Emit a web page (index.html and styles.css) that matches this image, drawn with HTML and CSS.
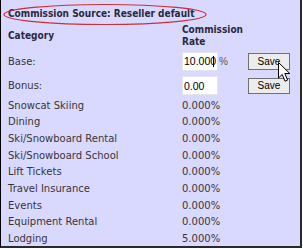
FILE: index.html
```html
<!DOCTYPE html>
<html lang="en">
<head>
    <meta charset="UTF-8">
    <title>Commission Rates</title>
    <link rel="stylesheet" href="styles.css">
</head>
<body>
    <div class="panel">
        <svg class="callout" width="206" height="24" viewBox="0 0 206 24">
            <ellipse cx="103" cy="12.5" rx="101" ry="10" fill="none" stroke="#c8303c" stroke-width="1.2"/>
        </svg>
        <h1 class="source">Commission Source: Reseller default</h1>

        <div class="rates">
            <div class="head">Category</div>
            <div class="head">Commission<br>Rate</div>
            <div></div>

            <div>Base:</div>
            <div class="field"><input class="rate-input" type="text" value="10.000"><span class="caret"></span><span class="unit">%</span></div>
            <div><button class="save">Save</button></div>

            <div>Bonus:</div>
            <div class="field"><input class="rate-input" type="text" value="0.00"></div>
            <div><button class="save small">Save</button></div>

            <div>Snowcat Skiing</div><div>0.000%</div><div></div>
            <div>Dining</div><div>0.000%</div><div></div>
            <div>Ski/Snowboard Rental</div><div>0.000%</div><div></div>
            <div>Ski/Snowboard School</div><div>0.000%</div><div></div>
            <div>Lift Tickets</div><div>0.000%</div><div></div>
            <div>Travel Insurance</div><div>0.000%</div><div></div>
            <div>Events</div><div>0.000%</div><div></div>
            <div>Equipment Rental</div><div>0.000%</div><div></div>
            <div>Lodging</div><div>5.000%</div><div></div>
        </div>

        <svg class="pointer" width="14" height="21" viewBox="0 0 14 21">
            <path d="M0.5 0.5 L0.5 16 L4.2 12.4 L7 19.2 L9.6 18.1 L6.8 11.5 L11.8 11.5 Z" fill="#fff" stroke="#000" stroke-width="1"/>
        </svg>
    </div>
</body>
</html>
```

FILE: styles.css
```css
body {
    margin: 0;
    background: #fff;
    font-family: 'DejaVu Sans', Verdana, sans-serif;
    font-size: 10px;
    color: #3a3434;
}
.panel {
    position: relative;
    box-sizing: border-box;
    width: 302px;
    height: 248px;
    padding: 7px 0 0 7px;
    background-color: #d9d9ff;
    border-left: 1px solid #000;
    border-right: 2px solid #2a2a2a;
    border-bottom: 2px solid #2a2a2a;
}
.callout {
    position: absolute;
    left: 1px;
    top: 2px;
}
.source, .head {
    font-family: 'DejaVu Sans Condensed', 'DejaVu Sans', sans-serif;
    font-stretch: condensed;
    font-weight: bold;
    color: #2a2a3a;
}
.source {
    margin: 0 0 3px;
    font-size: 10px;
    line-height: 14px;
}
.rates {
    display: grid;
    grid-template-columns: 174px 66px 1fr;
    grid-template-rows: 24px 26px 23px repeat(9, 16.625px);
    align-items: center;
}
.head {
    line-height: 12px;
}
.field {
    position: relative;
    display: flex;
    align-items: center;
}
.rate-input {
    box-sizing: border-box;
    width: 36px;
    height: 19px;
    padding: 0 1px;
    border: 1px solid #e4e4ee;
    background: #fff;
    font-family: 'Liberation Sans', Arial, sans-serif;
    font-size: 10.5px;
    color: #000;
}
.caret {
    position: absolute;
    left: 31px;
    top: 4px;
    width: 1px;
    height: 11px;
    background: #000;
}
.unit {
    margin-left: 1px;
    font-family: 'Liberation Sans', Arial, sans-serif;
    font-size: 10px;
    color: #555;
}
.save {
    box-sizing: border-box;
    width: 42px;
    height: 17px;
    padding: 0;
    border: 1px solid #707070;
    background: #ececec;
    font-family: 'Liberation Sans', Arial, sans-serif;
    font-size: 10px;
    color: #000;
}
.save.small {
    height: 16px;
}
.pointer {
    position: absolute;
    left: 277px;
    top: 62px;
}
```
